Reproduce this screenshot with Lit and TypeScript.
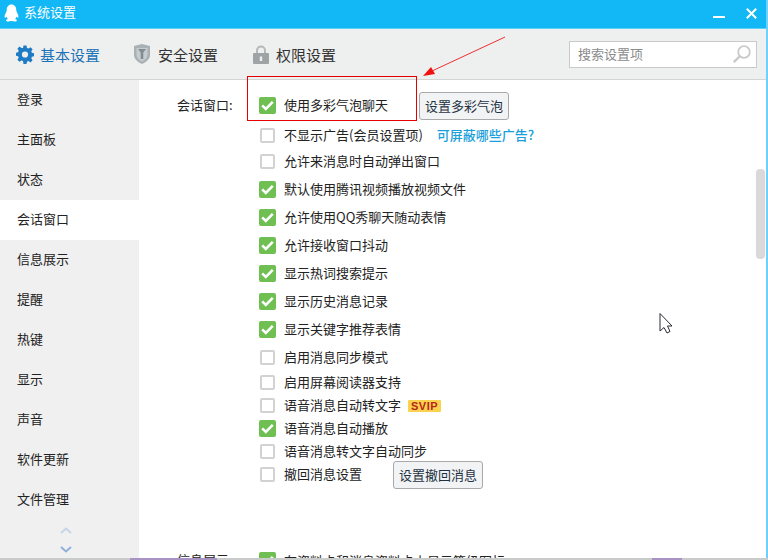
import { LitElement, html, css, svg } from "lit";
import { customElement } from "lit/decorators.js";

const side = ["登录","主面板","状态","会话窗口","信息展示","提醒","热键","显示","声音","软件更新","文件管理"];
type Row = { t: string; c: boolean; m: number; extra?: string };
const rows: Row[] = [
  { t: "使用多彩气泡聊天", c: true, m: 0, extra: "btn1" },
  { t: "不显示广告(会员设置项)", c: false, m: 10, extra: "link" },
  { t: "允许来消息时自动弹出窗口", c: false, m: 6 },
  { t: "默认使用腾讯视频播放视频文件", c: true, m: 8 },
  { t: "允许使用QQ秀聊天随动表情", c: true, m: 8 },
  { t: "允许接收窗口抖动", c: true, m: 8 },
  { t: "显示热词搜索提示", c: true, m: 8 },
  { t: "显示历史消息记录", c: true, m: 8 },
  { t: "显示关键字推荐表情", c: true, m: 8 },
  { t: "启用消息同步模式", c: false, m: 8 },
  { t: "启用屏幕阅读器支持", c: false, m: 5 },
  { t: "语音消息自动转文字", c: false, m: 3, extra: "svip" },
  { t: "语音消息自动播放", c: true, m: 3 },
  { t: "语音消息转文字自动同步", c: false, m: 3 },
  { t: "撤回消息设置", c: false, m: 3, extra: "btn2" },
];

@customElement("app-root")
export class AppRoot extends LitElement {
  static styles = css`
    :host { display: block; width: 768px; height: 560px; overflow: hidden; position: relative; background: #fff;
      font-family: "Noto Sans CJK SC", "Liberation Sans", sans-serif; font-size: 13px; color: #222; }
    .win { display: flex; flex-direction: column; height: 558px; border-right: 2px solid #6fd0fb; box-sizing: border-box; }
    .title { height: 29px; flex: none; background: #12b7f5; color: #fff; display: flex; align-items: center; padding: 0 0 2px 4px; gap: 5px; border-bottom: 1px solid #5fd0f8; box-sizing: border-box; }
    .title .name { padding-bottom: 3px; }
    .title .sp { flex: 1; }
    .title svg { display: block; }
    .wc { display: flex; align-items: center; gap: 21px; margin-right: 9px; }
    .tool { height: 51px; flex: none; background: #eeefef; border-bottom: 1px solid #d4d6d6; box-sizing: border-box; display: flex; align-items: center; padding-left: 16px; font-size: 15px; color: #333; }
    .tab { display: flex; align-items: center; gap: 6px; }
    .tab.on { color: #1b72b8; margin-right: 34px; }
    .tab.sec { gap: 8px; margin-right: 35px; }
    .tab.lock { gap: 7px; }
    .tool .sp { flex: 1; }
    .search { width: 188px; height: 27px; background: #fff; border: 1px solid #c9c9c9; box-sizing: border-box; margin-right: 9px; display: flex; align-items: center; padding: 0 4px 0 8px; font-size: 13px; color: #8a8a8a; justify-content: space-between; }
    .search span { padding-bottom: 2px; }
    .body { flex: 1; display: flex; min-height: 0; }
    .side { width: 139px; flex: none; background: #f0f0f0; display: flex; flex-direction: column; }
    .side .it { height: 40px; flex: none; display: flex; align-items: center; padding: 0 0 3px 17px; box-sizing: border-box; }
    .side .it.on { background: #fff; }
    .side .arrows { display: flex; flex-direction: column; align-items: center; gap: 12px; margin-top: 7px; padding-right: 7px; }
    .main { flex: 1; display: flex; flex-direction: column; padding: 15px 0 0 38px; min-width: 0; overflow: hidden; }
    .sec-block { display: flex; flex: none; }
    .sec-block.second { margin-top: 66px; }
    .lab { width: 55px; flex: none; height: 20px; line-height: 20px; white-space: nowrap; margin-right: 27px; }
    .rows { flex: 1; display: flex; flex-direction: column; }
    .row { display: flex; align-items: center; white-space: nowrap; height: 20px; flex: none; }
    .txt { padding-bottom: 2px; }
    .cb { border: 2px solid #d2d2d2; border-radius: 2px; background: #fff; flex: none; width: 11px; height: 11px; margin: 0 9px 0 1px; }
    .ck { width: 17px; height: 17px; border-radius: 2px; background: #6fbf52; flex: none; display: flex; align-items: center; justify-content: center; margin: 0 8px 0 0; }
    .btn { height: 28px; border: 1px solid #a9a9a9; border-radius: 3px; background: #f2f3f4; color: #1f3243; display: flex; align-items: center; padding: 0 0 2px 5px; width: 90px; box-sizing: border-box; flex: none; margin: 2px 0 0 31px; }
    .link { color: #1a9fdc; font-weight: 500; margin-left: 14px; padding-bottom: 2px; }
    .svip { margin-left: 7px; width: 33px; height: 12px; background: #fbd24e; color: #b8251c; font: bold 11px/12px "Liberation Sans", sans-serif; letter-spacing: .5px; text-align: center; border-radius: 1px; margin-top: 2px; }
    .red { position: absolute; left: 247px; top: 76px; width: 170px; height: 45px; border: 1px solid #e60000; box-sizing: border-box; pointer-events: none; }
    .over { position: absolute; left: 0; top: 0; pointer-events: none; }
    .thumb { position: absolute; left: 756px; top: 169px; width: 9px; height: 90px; border-radius: 4px; background: #d9d9d9; }
    .strip { position: absolute; left: 0; top: 558px; width: 768px; height: 2px; background: #c9cbcb; }
    .strip i { position: absolute; top: 0; height: 2px; background: #a893c4; }
    .strip .p1 { left: 130px; width: 87px; }
    .strip .p2 { left: 652px; width: 30px; }
  `;

  private tick() {
    return html`<span class="ck"><svg width="13" height="11" viewBox="0 0 13 11"><path d="M1.200 5.400 L4.800 9 L11.800 1.800" fill="none" stroke="#fff" stroke-width="2.600"/></svg></span>`;
  }

  private extra(e?: string) {
    if (e === "btn1") return html`<span class="btn">设置多彩气泡</span>`;
    if (e === "btn2") return html`<span class="btn">设置撤回消息</span>`;
    if (e === "link") return html`<span class="link">可屏蔽哪些广告?</span>`;
    if (e === "svip") return html`<span class="svip">SVIP</span>`;
    return null;
  }

  render() {
    return html`
      <div class="win">
        <div class="title">
          <svg width="15" height="19" viewBox="0 0 15 19"><path d="M7.500 .5C4.300 .5 2.700 3 2.700 6c0 1.300-.4 2-1 3.100C.7 11 .3 12.700 .8 13.500c.4.400 1-.2 1.600-1.100.3 1 .8 1.900 1.500 2.600-1.300.5-2 1.100-1.800 1.700.3.900 2.700 1.100 5 .4.300.1.500.1.800 0 2.300.7 4.700.5 5-.4.200-.6-.5-1.200-1.800-1.700.7-.7 1.200-1.600 1.500-2.600.6.900 1.200 1.500 1.600 1.100.5-.8.100-2.500-.9-4.400-.6-1.100-1-1.800-1-3.100C12.300 3 10.700 .5 7.500 .5z" fill="#fff"/></svg>
          <span class="name">系统设置</span>
          <span class="sp"></span>
          <span class="wc">
            <svg width="12" height="12" viewBox="0 0 12 12"><path d="M0 10h12" stroke="#fff" stroke-width="2"/></svg>
            <svg width="11" height="11" viewBox="0 0 11 11"><path d="M.8 .8l9.400 9.400M10.200 .8L.8 10.200" stroke="#fff" stroke-width="2"/></svg>
          </span>
        </div>
        <div class="tool">
          <span class="tab on">
            <svg width="18" height="19" viewBox="0 0 18 18"><path fill="#1f7cc4" fill-rule="evenodd" d="M7.500 0h3l.5 2.400 1.500.6 2-1.300 2.100 2.100-1.300 2 .6 1.500 2.100.5v3l-2.100.5-.6 1.500 1.300 2-2.100 2.100-2-1.300-1.500.6-.5 2.400h-3L7 15.600 5.500 15l-2 1.300-2.100-2.100 1.300-2-.6-1.500L0 10.200v-3l2.100-.5.600-1.500-1.300-2 2.100-2.100 2 1.300L7 2.400z M9 5.900a3.100 3.100 0 1 0 0 6.200 3.100 3.100 0 0 0 0-6.200z"/></svg>
            基本设置
          </span>
          <span class="tab sec">
            <svg width="16" height="20" viewBox="0 0 16 20"><path d="M0 2 8 0l8 2v9c0 4-4 7.200-8 9-4-1.800-8-5-8-9z" fill="#a9b1b5"/><path d="M2.500 4h11v6.800c0 3-2.700 5.300-5.500 6.700-2.800-1.400-5.500-3.700-5.500-6.700z" fill="#c6ccd0"/><path d="M4 5h8L9.300 8.500v6.500H6.700V8.500z" fill="#838c91"/></svg>
            安全设置
          </span>
          <span class="tab lock">
            <svg width="16" height="19" viewBox="0 0 16 19"><path d="M4 9V5.500a4 4 0 0 1 8 0V9" fill="none" stroke="#b4b8ba" stroke-width="2"/><rect x="0" y="8" width="16" height="11" rx="1" fill="#9ea3a6"/><rect x="6.800" y="11.500" width="2.400" height="4.500" fill="#eeefef"/></svg>
            权限设置
          </span>
          <span class="sp"></span>
          <div class="search"><span>搜索设置项</span>
            <svg width="20" height="20" viewBox="0 0 20 20"><circle cx="12" cy="8" r="5.800" fill="none" stroke="#c9c9c9" stroke-width="1.800"/><path d="M7.500 12.500 1.800 18.200" stroke="#c9c9c9" stroke-width="2.400"/></svg>
          </div>
        </div>
        <div class="body">
          <div class="side">
            ${side.map((s) => html`<div class="it ${s === "会话窗口" ? "on" : ""}">${s}</div>`)}
            <div class="arrows">
              <svg width="12" height="7" viewBox="0 0 12 7"><path d="M1 6l5-4.500L11 6" fill="none" stroke="#c4d5ea" stroke-width="2"/></svg>
              <svg width="12" height="7" viewBox="0 0 12 7"><path d="M1 1l5 4.500L11 1" fill="none" stroke="#8fb1d8" stroke-width="2"/></svg>
            </div>
          </div>
          <div class="main">
            <div class="sec-block">
              <div class="lab"><span class="txt">会话窗口:</span></div>
              <div class="rows">
                ${rows.map((r) => html`<div class="row" style="margin-top:${r.m}px">
                  ${r.c ? this.tick() : html`<span class="cb"></span>`}
                  <span class="txt">${r.t}</span>${this.extra(r.extra)}
                </div>`)}
              </div>
            </div>
            <div class="sec-block second">
              <div class="lab">信息展示</div>
              <div class="rows">
                <div class="row">${this.tick()}<span>在资料卡和消息资料卡上显示等级图标</span></div>
              </div>
            </div>
          </div>
        </div>
      </div>
      <div class="thumb"></div>
      <div class="strip"><i class="p1"></i><i class="p2"></i></div>
      <div class="red"></div>
      <svg class="over" width="768" height="560" viewBox="0 0 768 560">
        ${svg`<path d="M505 37 L432 71" stroke="#f03030" stroke-width="1"/>
        <path d="M423 76 L431 67 L435 74 Z" fill="#f01010"/>
        <path d="M660 313.500 V331 L664 327.500 L667 333 L670 331.500 L667.500 326 L672 326 Z" fill="#fff" stroke="#2a2a33" stroke-width="1"/>`}
      </svg>
    `;
  }
}
